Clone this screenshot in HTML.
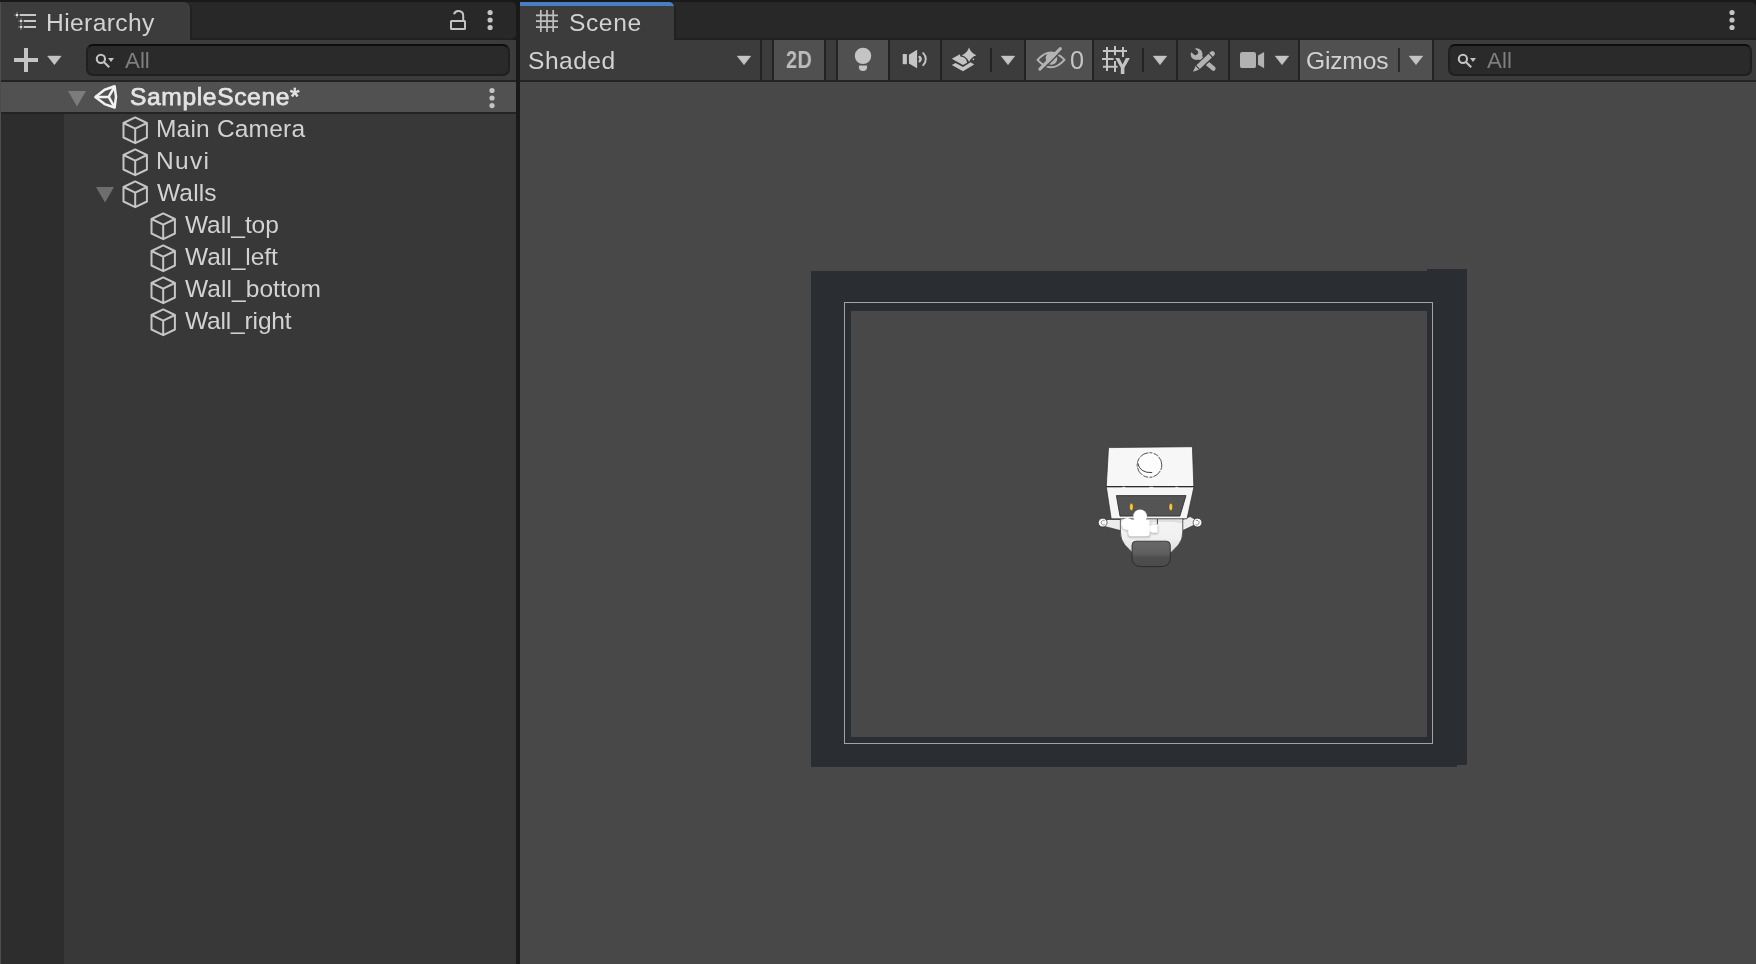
<!DOCTYPE html>
<html lang="en">
<head>
<meta charset="utf-8">
<title>Unity Editor - Hierarchy and Scene</title>
<style>
html,body{margin:0;padding:0;}
body{width:1756px;height:964px;overflow:hidden;background:#191919;position:relative;
  font-family:"Liberation Sans",sans-serif;}
.a{position:absolute;}
.t{position:absolute;white-space:nowrap;line-height:32px;height:32px;font-size:24px;color:#d2d2d2;will-change:transform;}
#ico{position:absolute;left:0;top:0;width:1756px;height:964px;}
</style>
</head>
<body>

<!-- ================= LEFT PANEL : HIERARCHY ================= -->
<div class="a" style="left:0;top:2px;width:516px;height:38px;box-sizing:border-box;background:#282828;border-bottom:2px solid #212121;border-radius:0 5px 5px 0;"></div>
<div class="a" style="left:0;top:2px;width:192px;height:38px;background:#212121;border-radius:0 7px 0 0;"></div>
<div class="a" style="left:0;top:2px;width:190px;height:38px;background:#3c3c3c;border-radius:0 6px 0 0;"></div>
<div class="a" style="left:0;top:40px;width:516px;height:40px;background:#3c3c3c;"></div>
<div class="a" style="left:0;top:80px;width:516px;height:2px;background:#232323;"></div>
<div class="a" style="left:0;top:82px;width:516px;height:30px;background:#515151;"></div>
<div class="a" style="left:0;top:112px;width:516px;height:2px;background:#232323;"></div>
<div class="a" style="left:0;top:114px;width:516px;height:850px;background:#383838;"></div>
<div class="a" style="left:0;top:114px;width:64px;height:850px;background:#2d2d2d;"></div>
<div class="a" style="left:0;top:2px;width:1px;height:962px;background:#4d4d4d;"></div>

<!-- search field (hierarchy) -->
<div class="a" style="left:86px;top:44px;width:424px;height:32px;box-sizing:border-box;background:#2a2a2a;border:2px solid #1f1f1f;border-top-color:#0d0d0d;border-radius:7px;"></div>


<!-- ================= RIGHT PANEL : SCENE ================= -->
<div class="a" style="left:520px;top:2px;width:1236px;height:38px;box-sizing:border-box;background:#282828;border-bottom:2px solid #212121;border-radius:0 5px 0 0;"></div>
<div class="a" style="left:520px;top:2px;width:156px;height:38px;background:#212121;border-radius:0 6px 0 0;"></div>
<div class="a" style="left:520px;top:2px;width:154px;height:38px;background:#3c3c3c;border-radius:0 5px 0 0;overflow:hidden;">
  <div class="a" style="left:0;top:0;width:154px;height:4px;background:#4a7dc2;"></div>
</div>
<div class="a" style="left:520px;top:40px;width:1236px;height:40px;background:#3c3c3c;"></div>
<div class="a" style="left:520px;top:80px;width:1236px;height:2px;background:#232323;"></div>
<div class="a" style="left:520px;top:82px;width:1236px;height:882px;background:#484848;"></div>

<!-- toolbar buttons -->
<div class="a" style="left:760px;top:40px;width:2px;height:40px;background:#232323;"></div>
<div class="a" style="left:772px;top:40px;width:54px;height:40px;background:#232323;"></div>
<div class="a" style="left:774px;top:40px;width:50px;height:40px;background:#505050;"></div>
<div class="a" style="left:836px;top:40px;width:54px;height:40px;background:#232323;"></div>
<div class="a" style="left:838px;top:40px;width:50px;height:40px;background:#505050;"></div>
<div class="a" style="left:940px;top:40px;width:2px;height:40px;background:#232323;"></div>
<div class="a" style="left:990px;top:48px;width:2px;height:24px;background:#232323;"></div>
<div class="a" style="left:1024px;top:40px;width:70px;height:40px;background:#232323;"></div>
<div class="a" style="left:1026px;top:40px;width:66px;height:40px;background:#505050;"></div>
<div class="a" style="left:1142px;top:48px;width:2px;height:24px;background:#232323;"></div>
<div class="a" style="left:1176px;top:40px;width:2px;height:40px;background:#232323;"></div>
<div class="a" style="left:1228px;top:40px;width:2px;height:40px;background:#232323;"></div>
<div class="a" style="left:1298px;top:40px;width:136px;height:40px;background:#232323;"></div>
<div class="a" style="left:1300px;top:40px;width:132px;height:40px;background:#505050;"></div>
<div class="a" style="left:1398px;top:48px;width:2px;height:24px;background:#2a2a2a;"></div>

<!-- search field (scene) -->
<div class="a" style="left:1448px;top:44px;width:304px;height:32px;box-sizing:border-box;background:#2a2a2a;border:2px solid #1f1f1f;border-top-color:#0d0d0d;border-radius:7px;"></div>


<!-- scene contents: walls -->
<div class="a" style="left:811px;top:271px;width:646px;height:40px;background:#2a2d32;"></div>
<div class="a" style="left:811px;top:271px;width:40px;height:496px;background:#2a2d32;"></div>
<div class="a" style="left:811px;top:737px;width:646px;height:30px;background:#2a2d32;"></div>
<div class="a" style="left:1427px;top:269px;width:40px;height:496px;background:#2a2d32;"></div>
<div class="a" style="left:844px;top:302px;width:589px;height:442px;box-sizing:border-box;border:1.4px solid #a3a3a3;"></div>

<div class="t" style="left:786px;top:44px;font-size:23px;font-weight:bold;color:#bcbcbc;letter-spacing:0.4px;transform:scaleX(0.865);transform-origin:0 0;">2D</div>
<!--TEXT-->
<div class="t" style="left:46.00px;top:7.00px;font-size:24.6px;color:#d2d2d2;letter-spacing:0.397px;">Hierarchy</div>
<div class="t" style="left:125.00px;top:45.00px;font-size:22.3px;color:#7e7e7e;letter-spacing:0.024px;">All</div>
<div class="t" style="left:130.00px;top:81.00px;font-size:24.6px;color:#e4e4e4;letter-spacing:0.624px;-webkit-text-stroke:0.75px #e4e4e4;">SampleScene*</div>
<div class="t" style="left:156.00px;top:113.00px;font-size:24.5px;color:#d2d2d2;letter-spacing:0.196px;">Main Camera</div>
<div class="t" style="left:156.00px;top:145.00px;font-size:24.5px;color:#d2d2d2;letter-spacing:1.346px;">Nuvi</div>
<div class="t" style="left:157.00px;top:177.00px;font-size:24.5px;color:#d2d2d2;letter-spacing:0.154px;">Walls</div>
<div class="t" style="left:185.00px;top:209.00px;font-size:24.5px;color:#d2d2d2;letter-spacing:-0.091px;">Wall_top</div>
<div class="t" style="left:185.00px;top:241.00px;font-size:24.5px;color:#d2d2d2;letter-spacing:-0.013px;">Wall_left</div>
<div class="t" style="left:185.00px;top:273.00px;font-size:24.5px;color:#d2d2d2;letter-spacing:0.071px;">Wall_bottom</div>
<div class="t" style="left:185.00px;top:305.00px;font-size:24.5px;color:#d2d2d2;letter-spacing:-0.154px;">Wall_right</div>
<div class="t" style="left:569.00px;top:7.00px;font-size:24.6px;color:#d2d2d2;letter-spacing:0.584px;">Scene</div>
<div class="t" style="left:528.00px;top:45.00px;font-size:24.6px;color:#d2d2d2;letter-spacing:0.484px;">Shaded</div>
<div class="t" style="left:1306.00px;top:45.00px;font-size:24.6px;color:#d2d2d2;letter-spacing:-0.181px;">Gizmos</div>
<div class="t" style="left:1070.00px;top:44.00px;font-size:25.2px;color:#c4c4c4;letter-spacing:0.000px;">0</div>
<div class="t" style="left:1487.00px;top:45.00px;font-size:22.3px;color:#7e7e7e;letter-spacing:0.070px;">All</div>
<!--/TEXT-->

<svg id="ico" viewBox="0 0 1756 964" width="1756" height="964">
<g fill="#c8c8c8">
<rect x="20" y="14" width="16" height="2"/><rect x="24" y="20" width="12" height="2"/><rect x="24" y="26" width="12" height="2"/>
<rect x="16" y="14" width="2" height="2" fill="#eeeeee"/><rect x="20" y="20" width="2" height="2" fill="#e0e0e0"/><rect x="20" y="26" width="2" height="2" fill="#e0e0e0"/>
<g opacity="0.28"><rect x="16" y="12" width="2" height="6"/><rect x="14" y="14" width="6" height="2"/><rect x="20" y="18" width="2" height="12"/><rect x="18" y="20" width="6" height="2"/><rect x="18" y="26" width="6" height="2"/></g>
</g>
<g fill="none" stroke="#c4c4c4" stroke-width="2"><rect x="451" y="21" width="14" height="8" rx="0.5"/><path d="M454 14.3 A4.7 4.7 0 0 1 463.2 15.7 V21"/></g>
<circle cx="490.1" cy="12.5" r="2.6" fill="#c4c4c4"/><circle cx="490.1" cy="20" r="2.6" fill="#c4c4c4"/><circle cx="490.1" cy="27.5" r="2.6" fill="#c4c4c4"/>
<circle cx="1732" cy="12.5" r="2.6" fill="#c4c4c4"/><circle cx="1732" cy="20" r="2.6" fill="#c4c4c4"/><circle cx="1732" cy="27.5" r="2.6" fill="#c4c4c4"/>
<circle cx="492" cy="90.5" r="2.6" fill="#c4c4c4"/><circle cx="492" cy="98" r="2.6" fill="#c4c4c4"/><circle cx="492" cy="105.6" r="2.6" fill="#c4c4c4"/>
<g fill="#c4c4c4"><rect x="14" y="58" width="24" height="4"/><rect x="24" y="48" width="4" height="24"/></g>
<path d="M47.60 56.1 H61.20 L54.40 64.7 Z" fill="#c4c4c4" stroke="#c4c4c4" stroke-width="0.5" stroke-linejoin="round"/>
<g transform="translate(0 0)"><circle cx="100.9" cy="58.9" r="4.1" fill="none" stroke="#c4c4c4" stroke-width="2.1"/><path d="M103.9 61.9 L109.2 67.2" stroke="#c4c4c4" stroke-width="2.1" fill="none"/><path d="M108 58 H114 L111 61.9 Z" fill="#c4c4c4"/></g>
<g transform="translate(1362 0)"><circle cx="100.9" cy="58.9" r="4.1" fill="none" stroke="#c4c4c4" stroke-width="2.1"/><path d="M103.9 61.9 L109.2 67.2" stroke="#c4c4c4" stroke-width="2.1" fill="none"/><path d="M108 58 H114 L111 61.9 Z" fill="#c4c4c4"/></g>
<path d="M68 91 H86 L77 106.6 Z" fill="#7c7c7c"/>
<g fill="none" stroke="#f2f2f2" stroke-width="2.5" stroke-linejoin="round" stroke-linecap="round"><path d="M95.4 96.9 L104.6 89.7 L114.6 86.3 L116 96.9 L114.6 107.5 L104.6 104.1 Z"/><path d="M96 96.9 H108.7 M108.7 96.9 L114.4 86.8 M108.7 96.9 L114.4 107"/></g>
<path d="M135.2 117.4 L146.9 123.0 L146.9 137.5 L135.2 143.2 L123.5 137.5 L123.5 123.0 Z M123.5 123.0 L135.2 128.7 L146.9 123.0 M135.2 128.7 L135.2 143.2" fill="none" stroke="#c6c6c6" stroke-width="2" stroke-linejoin="round"/>
<path d="M135.2 149.4 L146.9 155.0 L146.9 169.5 L135.2 175.2 L123.5 169.5 L123.5 155.0 Z M123.5 155.0 L135.2 160.7 L146.9 155.0 M135.2 160.7 L135.2 175.2" fill="none" stroke="#c6c6c6" stroke-width="2" stroke-linejoin="round"/>
<path d="M135.2 181.4 L146.9 187.0 L146.9 201.5 L135.2 207.2 L123.5 201.5 L123.5 187.0 Z M123.5 187.0 L135.2 192.7 L146.9 187.0 M135.2 192.7 L135.2 207.2" fill="none" stroke="#c6c6c6" stroke-width="2" stroke-linejoin="round"/>
<path d="M163.2 213.4 L174.9 219.0 L174.9 233.5 L163.2 239.2 L151.5 233.5 L151.5 219.0 Z M151.5 219.0 L163.2 224.7 L174.9 219.0 M163.2 224.7 L163.2 239.2" fill="none" stroke="#c6c6c6" stroke-width="2" stroke-linejoin="round"/>
<path d="M163.2 245.4 L174.9 251.0 L174.9 265.5 L163.2 271.2 L151.5 265.5 L151.5 251.0 Z M151.5 251.0 L163.2 256.7 L174.9 251.0 M163.2 256.7 L163.2 271.2" fill="none" stroke="#c6c6c6" stroke-width="2" stroke-linejoin="round"/>
<path d="M163.2 277.4 L174.9 283.0 L174.9 297.5 L163.2 303.2 L151.5 297.5 L151.5 283.0 Z M151.5 283.0 L163.2 288.7 L174.9 283.0 M163.2 288.7 L163.2 303.2" fill="none" stroke="#c6c6c6" stroke-width="2" stroke-linejoin="round"/>
<path d="M163.2 309.4 L174.9 315.0 L174.9 329.5 L163.2 335.2 L151.5 329.5 L151.5 315.0 Z M151.5 315.0 L163.2 320.7 L174.9 315.0 M163.2 320.7 L163.2 335.2" fill="none" stroke="#c6c6c6" stroke-width="2" stroke-linejoin="round"/>
<path d="M96 187 H114 L105 202.6 Z" fill="#6e6e6e"/>
<g fill="none" stroke="#c0c0c0" stroke-width="1.7"><path d="M540.8 10 V32 M547 10 V32 M553.2 10 V32 M536 15.4 H558 M536 21.2 H558 M536 27.2 H558"/></g>
<path d="M737.20 56.1 H750.80 L744.00 64.7 Z" fill="#c4c4c4" stroke="#c4c4c4" stroke-width="0.5" stroke-linejoin="round"/>
<circle cx="863" cy="55.9" r="8.2" fill="#c4c4c4"/><path d="M858.9 65.4 H867.1 V67 A4.1 4.1 0 0 1 858.9 67 Z" fill="#c4c4c4"/>
<g fill="#c4c4c4"><rect x="902.7" y="54" width="4.2" height="10.2" rx="0.6"/><path d="M908.9 54.8 L917.1 49.8 V68.3 L908.9 63.4 Z"/></g><g fill="none" stroke="#c4c4c4" stroke-width="2" stroke-linecap="round"><path d="M919.6 56.9 A3.2 3.2 0 0 1 919.6 61.3" stroke-width="2.4"/><path d="M923.2 53.1 A8.3 8.3 0 0 1 923.2 65.1"/></g>
<g fill="#c4c4c4"><path d="M951.8 58.7 L959.9 54.2 L960.4 56.4 A6.6 6.6 0 0 1 967.1 62.7 L963 64.9 Z"/><path d="M951.8 65 L955.6 62.9 L963 67 L970.6 62.2 L974.2 64.6 L963 71.2 Z"/><circle cx="973.4" cy="59.4" r="0.8"/></g>
<path d="M969.05 47.5 Q970.9 53.3 976.5 55.15 Q970.9 57 969.05 62 Q967.2 57 961.6 55.15 Q967.2 53.3 969.05 47.5 Z" fill="#c4c4c4" stroke="#3c3c3c" stroke-width="1.8" paint-order="stroke" stroke-linejoin="round"/>
<path d="M1001.20 56.1 H1014.80 L1008.00 64.7 Z" fill="#c4c4c4" stroke="#c4c4c4" stroke-width="0.5" stroke-linejoin="round"/>
<path d="M1037.5 59.9 Q1051 45 1064.5 59.9 Q1051 74.8 1037.5 59.9 Z" fill="none" stroke="#b4b4b4" stroke-width="2" stroke-linejoin="round"/><circle cx="1051.3" cy="58.7" r="6" fill="#b4b4b4"/><path d="M1045.2 54.6 Q1044.6 58 1045.6 61.2" stroke="#505050" stroke-width="1.1" fill="none"/><path d="M1062.6 49.9 L1041.6 71" stroke="#505050" stroke-width="1.5"/><path d="M1060.4 48.6 L1039.9 69.1" stroke="#b4b4b4" stroke-width="3" stroke-linecap="round"/>
<g fill="none" stroke="#c4c4c4" stroke-width="2"><path d="M1107 46.9 V71.1 M1115 45.9 V55.3 M1115 61 V71.9 M1123 47 V57 M1102.9 51 H1127 M1102 59 H1113.6 M1102.9 66.8 H1117.6"/></g>
<path d="M1115.3 58 H1119.3 L1122.6 64.5 L1125.9 58 H1129.9 L1124.4 67.8 V73.9 H1120.8 V67.8 Z" fill="#c4c4c4" stroke="#3c3c3c" stroke-width="1.6" paint-order="stroke"/>
<path d="M1153.20 56.1 H1166.80 L1160.00 64.7 Z" fill="#c4c4c4" stroke="#c4c4c4" stroke-width="0.5" stroke-linejoin="round"/>
<path d="M1196.8 54.7 L1213.4 68.5" stroke="#b2b2b2" stroke-width="4.5" stroke-linecap="round" fill="none"/><circle cx="1196.6" cy="54.2" r="5.9" fill="#b2b2b2"/><path d="M1195.5 52.4 L1189.3 47.3" stroke="#3c3c3c" stroke-width="5.2" stroke-linecap="round" fill="none"/>
<path d="M1193.1 71.9 L1214.2 51.9" stroke="#3c3c3c" stroke-width="7.6" stroke-linecap="butt" fill="none"/>
<g fill="#b2b2b2"><path d="M1193.08 71.87 L1195.57 66.07 L1199.01 69.71 Z"/><path d="M1196.37 65.31 L1208.49 53.84 L1211.93 57.48 L1199.81 68.95 Z"/><path d="M1209.29 53.08 L1210.67 51.78 A2.5 2.5 0 0 1 1214.11 55.42 L1212.73 56.72 Z"/></g>
<g fill="#b2b2b2"><rect x="1240" y="52.1" width="16" height="16" rx="2.2"/><path d="M1258 55.4 L1264.1 51.9 V68.3 L1258 64.8 Z"/></g>
<path d="M1275.20 56.1 H1288.80 L1282.00 64.7 Z" fill="#c4c4c4" stroke="#c4c4c4" stroke-width="0.5" stroke-linejoin="round"/>
<path d="M1409.20 56.1 H1422.80 L1416.00 64.7 Z" fill="#c4c4c4" stroke="#c4c4c4" stroke-width="0.5" stroke-linejoin="round"/>
<defs><filter id="gsh" x="-20%" y="-20%" width="140%" height="140%"><feGaussianBlur stdDeviation="0.9"/></filter>
<linearGradient id="whl" x1="0" y1="0" x2="0" y2="1"><stop offset="0" stop-color="#686868"/><stop offset="0.5" stop-color="#5e5e5e"/><stop offset="0.62" stop-color="#4f4f4f"/><stop offset="1" stop-color="#4a4a4a"/></linearGradient>
<linearGradient id="bdy" x1="0" y1="0" x2="0" y2="1"><stop offset="0" stop-color="#f4f4f4"/><stop offset="0.55" stop-color="#f1f1f1"/><stop offset="1" stop-color="#dcdcdc"/></linearGradient></defs>
<g stroke-linejoin="round">
<!-- arms -->
<path d="M1121 519.4 L1109 519.4 L1104 520.4 L1104.6 526.6 L1108.4 527.4 L1121 530.8 Z" fill="#ededed" stroke="#2e2e2e" stroke-width="0.7"/>
<path d="M1182.4 519.6 L1190.2 516.6 L1195.6 519.6 L1196 525.4 L1193.2 525.6 L1182.4 530.8 Z" fill="#ededed" stroke="#2e2e2e" stroke-width="0.7"/>
<circle cx="1102.7" cy="522.6" r="4.4" fill="#f8f8f8" stroke="#2e2e2e" stroke-width="0.7"/>
<circle cx="1197.5" cy="522.6" r="4.4" fill="#f8f8f8" stroke="#2e2e2e" stroke-width="0.7"/>
<path d="M1104.6 520.6 A2.3 2.3 0 1 0 1104.8 524.6" fill="none" stroke="#555" stroke-width="0.6"/>
<path d="M1195.8 520.6 A2.3 2.3 0 1 1 1195.6 524.6" fill="none" stroke="#555" stroke-width="0.6"/>
<!-- body -->
<path d="M1120.4 518.6 H1182.8 V532 Q1182.8 539.5 1178.4 545 L1171.2 552.4 H1132 L1124.8 545 Q1120.4 539.5 1120.4 532 Z" fill="url(#bdy)" stroke="#2e2e2e" stroke-width="0.7"/>
<path d="M1150 519.4 Q1168 518.6 1182 520.4 L1182 523 Q1166 520.6 1150 522.6 Z" fill="#dedede"/>
<path d="M1157.4 519 V524.4" stroke="#2a2a2a" stroke-width="0.9"/>
<!-- wheel -->
<path d="M1136 541.2 H1166.4 Q1170.3 541.2 1170.3 545.2 V557.6 Q1170.3 566.6 1161 566.6 H1141.4 Q1132 566.6 1132 557.6 V545.2 Q1132 541.2 1136 541.2 Z" fill="url(#whl)" stroke="#262626" stroke-width="0.8"/>
<!-- head front -->
<path d="M1106.3 486.6 H1194 L1187 518.8 H1111.2 Z" fill="#f6f6f6" stroke="#2e2e2e" stroke-width="0.7"/>
<!-- visor -->
<path d="M1116.4 495.6 H1186 L1179.9 516.1 H1120 Z" fill="#545454" stroke="#262626" stroke-width="0.8"/>
<ellipse cx="1131.4" cy="507" rx="1.9" ry="3.7" fill="#f6c944" stroke="#3a3320" stroke-width="0.5"/>
<ellipse cx="1170.8" cy="507" rx="1.9" ry="3.7" fill="#f6c944" stroke="#3a3320" stroke-width="0.5"/>
<!-- head top -->
<path d="M1108.5 447.6 L1192.4 446.7 L1193.8 486.5 H1106.3 Z" fill="#f7f7f7" stroke="#2e2e2e" stroke-width="0.7"/>
<path d="M1106.3 486.7 H1193.8" stroke="#1e1e1e" stroke-width="1.1" stroke-dasharray="16 3 24 4 22 3"/>
<circle cx="1149.5" cy="465" r="12.3" fill="#fdfdfd" stroke="#2a2a2a" stroke-width="0.8" stroke-dasharray="5 1.2 9 1 3 1.4"/>
<path d="M1137.6 462.6 Q1139.6 473.2 1152.2 472.6" fill="none" stroke="#2a2a2a" stroke-width="0.9"/>
<!-- camera gizmo -->
<g fill="#9a9a9a" opacity="0.7" filter="url(#gsh)" transform="translate(0 0.7)">
<circle cx="1140.1" cy="516.6" r="6.8"/><circle cx="1127.2" cy="524.1" r="6.1"/>
<rect x="1127.8" y="520" width="22.4" height="16.8" rx="2.6"/>
<path d="M1149.6 526 L1152.6 524.4 H1158 V533.2 H1152.6 L1149.6 531.4 Z"/></g>
<g fill="#ffffff">
<circle cx="1140.1" cy="516.4" r="6.8"/><circle cx="1127.2" cy="524" r="6"/>
<rect x="1128.2" y="520" width="21.5" height="16.2" rx="2.4"/>
<path d="M1149.4 526.1 L1152.4 524.7 H1157.6 V532.7 H1152.4 L1149.4 531.3 Z"/></g>
</g>
</svg>

</body>
</html>
